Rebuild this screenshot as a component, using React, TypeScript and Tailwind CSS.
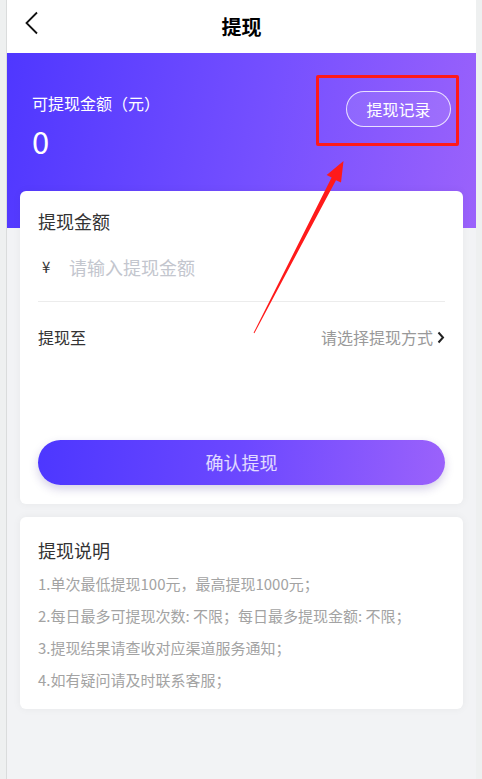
import React from 'react';

const rules = [
  '1.单次最低提现100元，最高提现1000元；',
  '2.每日最多可提现次数: 不限；每日最多提现金额: 不限；',
  '3.提现结果请查收对应渠道服务通知；',
  '4.如有疑问请及时联系客服；',
];

export default function App() {
  return (
    <div
      className="relative w-full min-h-[779px] bg-[#eef0f0] flex px-[6px]"
      style={{ fontFamily: '"Noto Sans CJK SC", "Noto Sans", sans-serif' }}
    >
      <div className="w-[470px] min-h-[779px] border-l border-[#dadcdc] bg-[#f2f3f5] flex flex-col">
        {/* Header */}
        <div className="relative h-[53px] bg-white flex items-center justify-center">
          <svg className="absolute left-[18px] top-[11px]" width="14" height="24" viewBox="0 0 14 24" fill="none">
            <path d="M12 1.5 L1.5 12 L12 22.5" stroke="#111" strokeWidth="1.8" />
          </svg>
          <h1 className="text-[20px] font-bold text-black">提现</h1>
        </div>

        {/* Banner */}
        <div className="h-[175px] bg-[linear-gradient(100deg,#4f37ff_0%,#7650ff_55%,#9b62fb_100%)] flex justify-between pl-[25px] pr-[25px] pt-[38px]">
          <div className="text-white">
            <p className="text-[16px] leading-[24px]">可提现金额（元）</p>
            <p className="text-[31px] leading-[36px] mt-[8px]">0</p>
          </div>
          <button className="h-[36px] w-[105px] rounded-full border border-white/80 bg-white/10 text-white text-[16px]">
            提现记录
          </button>
        </div>

        {/* Form card */}
        <div className="mx-[13px] -mt-[37px] bg-white rounded-[6px] shadow-[0_0_8px_rgba(0,0,0,0.05)] px-[18px] pt-[18px] pb-[19px]">
          <p className="text-[18px] leading-[24px] text-[#333]">提现金额</p>
          <div className="h-[68px] flex items-center">
            <span className="w-[31px] pl-[4px] text-[15px] text-[#333]">¥</span>
            <span className="text-[18px] text-[#c3c6ce]">请输入提现金额</span>
          </div>
          <div className="h-px bg-[#ececec]" />
          <div className="h-[70px] flex items-center justify-between">
            <span className="text-[16px] text-[#333]">提现至</span>
            <span className="flex items-center gap-[4px] text-[16px] text-[#999]">
              请选择提现方式
              <svg width="8" height="13" viewBox="0 0 8 13" fill="none">
                <path d="M1.5 1.5 L6 6.5 L1.5 11.5" stroke="#222" strokeWidth="2" />
              </svg>
            </span>
          </div>
          <button className="mt-[68px] w-full h-[45px] rounded-full bg-[linear-gradient(95deg,#4d37ff_0%,#6c48ff_50%,#9b62fb_100%)] shadow-[0_4px_10px_rgba(60,40,140,0.22)] text-[18px] text-white/80">
            确认提现
          </button>
        </div>

        {/* Rules card */}
        <div className="mx-[13px] mt-[13px] bg-white rounded-[6px] shadow-[0_0_8px_rgba(0,0,0,0.05)] px-[18px] pt-[21px] pb-[13px]">
          <p className="text-[18px] leading-[24px] text-[#333]">提现说明</p>
          <div className="mt-[6px]">
            {rules.map(r => (
              <p key={r} className="text-[15px] leading-[32px] text-[#a3a3a3]">{r}</p>
            ))}
          </div>
        </div>
      </div>

      {/* Annotation overlay */}
      <div className="absolute left-[316px] top-[75px] w-[143px] h-[71px] border-[3px] border-[#ff1a1a] rounded-[2px]" />
      <svg className="absolute left-0 top-0 pointer-events-none" width="482" height="779" viewBox="0 0 482 779">
        <polygon
          points="343.5,161 341,182.5 336,180.2 254.4,333.2 253.6,332.8 331.6,177.6 326.7,175.1"
          fill="#ff1a1a"
        />
      </svg>
    </div>
  );
}
